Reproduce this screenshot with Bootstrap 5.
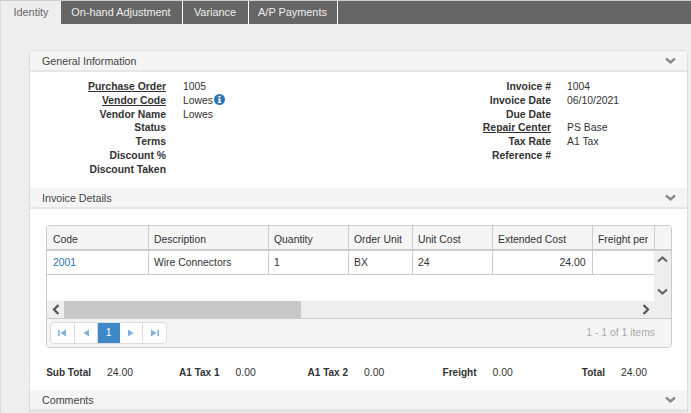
<!DOCTYPE html>
<html lang="en">
<head>
<meta charset="utf-8">
<title>Invoice</title>
<link rel="stylesheet" href="https://cdn.jsdelivr.net/npm/bootstrap@5.3.0/dist/css/bootstrap.min.css">
<style>
html,body{height:413px;overflow:hidden}
body{background:#eee;font-family:"Liberation Sans",Arial,sans-serif;font-size:10.4px;color:#333;border-top:1px solid #ccc;border-left:1px solid #ddd}
.tabbar{height:23px;background:#666;flex-wrap:nowrap}
.tabbar .tabx{display:block;height:23px;line-height:23px;font-size:10.9px;color:#eee;text-align:center;border-right:1px solid #fff;text-decoration:none;padding-right:1px}
.tabbar .tabx.on{background:#eee;color:#666;border-right:0;padding-right:0}
.panelx{margin:26px 3px 0 28px;border:1px solid #ddd;border-radius:4px 4px 0 0;background:#fff;--bs-card-inner-border-radius:3px}
.headx{height:21px;line-height:17px;padding:2px 11px 0 12px;font-size:10.7px;color:#444;background:#f5f5f5;border-bottom:2px solid #e6e6e6}
.headx svg{display:block;margin-top:-2px}
.bodyx{height:116px;padding-top:8px}
.rowx{line-height:13.8px;height:13.8px;display:flex}
.lab{font-weight:700;text-align:right;color:#333}
.lab a{color:#333}
.left-lab{width:136px}
.left-val{margin-left:17px}
.right-lab{width:191px}
.right-val{margin-left:16px}
.fieldsL{width:330px}
.infox{margin-left:-1.5px}
.bodyy{height:181px;padding:16px 15px 0 16px}
.gridx{height:123px;width:626px;border:1px solid #ccc;border-radius:4px;overflow:hidden;background:#f5f5f5}
.gridhead{height:25px;border-bottom:2px solid #ccc;background:#f5f5f5}
.gridt{table-layout:fixed;border-collapse:collapse;width:607px;margin:0}
.gridt th,.gridt td{font-weight:400;border:0;border-right:1px solid #ccc;padding:0 6px 0 5.5px;overflow:hidden;white-space:nowrap;color:#333;background:transparent;box-shadow:none;vertical-align:middle}
.gridt th:first-child,.gridt td:first-child{padding-left:6px}
.gridt th{height:23px;background:#f5f5f5;padding-top:5px}
.gridt td{height:23px;background:#fff;border-bottom:1px solid #ccc;padding-top:2px}
.gridt th:last-child{padding-right:0}
.gridt a{color:#2e74b5;text-decoration:none}
.gridmid{height:67px}
.mainc{width:607px;flex:none}
.blank{height:26px;background:#fff}
.hbar{height:17px;background:#eee;display:flex}
.vbar{width:17px;background:#eee;display:flex;flex-direction:column;justify-content:space-between;align-items:center;padding:4px 0 22px}
.arrow{width:17px;flex:none;display:flex;align-items:center;justify-content:center}
.thumb{width:237px;background:#c8c8c8;flex:none}
.pagerx{height:29px;border-top:1px solid #ccc;padding:3px 3px 0 3px;background:#f5f5f5}
.pages{width:117px;height:22px;border:1px solid #ddd;border-radius:4px;background:#fff;overflow:hidden;flex:none}
.pages .cellx{flex:1 1 0;display:flex;align-items:center;justify-content:center;border-right:1px solid #ddd;color:#fff}
.pages .cellx:last-child{border-right:0}
.pages .cellx.on{background:#3e88c8;border-right:0;flex:none;width:22px;margin-left:-.5px}
.countx{color:#aaa;padding-right:13px;line-height:22px}
.totals{display:grid;grid-template-columns:repeat(5,128.5px);margin-top:18px;line-height:13px}
.totcell{display:flex}
.totcell b{width:45px;text-align:right;white-space:nowrap;color:#333;font-size:10px}
.totcell span{margin-left:16px}
</style>
</head>
<body>
<div class="tabbar d-flex">
  <a class="tabx on" href="#" style="width:60px">Identity</a>
  <a class="tabx" href="#" style="width:122px">On-hand Adjustment</a>
  <a class="tabx" href="#" style="width:66px">Variance</a>
  <a class="tabx" href="#" style="width:89px">A/P Payments</a>
</div>
<div class="card panelx rounded-bottom-0">
  <div class="headx d-flex justify-content-between align-items-center">General Information
    <svg width="11" height="8" viewBox="0 0 11 8"><path d="M1 1.5 5.5 5.5 10 1.5" fill="none" stroke="#8a8a8a" stroke-width="2.4"/></svg>
  </div>
  <div class="bodyx d-flex">
    <div class="fieldsL">
      <div class="rowx"><div class="lab left-lab"><a href="#">Purchase Order</a></div><div class="left-val">1005</div></div>
      <div class="rowx"><div class="lab left-lab"><a href="#">Vendor Code</a></div><div class="left-val">Lowes
        <svg width="11" height="11" viewBox="0 0 11 11" class="align-top infox"><circle cx="5.5" cy="5.5" r="5.5" fill="#2e74b5"/><path d="M4.5 2h2v1.6h-2zM4 4.4h2.5v3.4h.8V9H3.9V7.8h.8V5.6H4z" fill="#fff"/></svg></div></div>
      <div class="rowx"><div class="lab left-lab">Vendor Name</div><div class="left-val">Lowes</div></div>
      <div class="rowx"><div class="lab left-lab">Status</div></div>
      <div class="rowx"><div class="lab left-lab">Terms</div></div>
      <div class="rowx"><div class="lab left-lab">Discount %</div></div>
      <div class="rowx"><div class="lab left-lab">Discount Taken</div></div>
    </div>
    <div>
      <div class="rowx"><div class="lab right-lab">Invoice #</div><div class="right-val">1004</div></div>
      <div class="rowx"><div class="lab right-lab">Invoice Date</div><div class="right-val">06/10/2021</div></div>
      <div class="rowx"><div class="lab right-lab">Due Date</div></div>
      <div class="rowx"><div class="lab right-lab"><a href="#">Repair Center</a></div><div class="right-val">PS Base</div></div>
      <div class="rowx"><div class="lab right-lab">Tax Rate</div><div class="right-val">A1 Tax</div></div>
      <div class="rowx"><div class="lab right-lab">Reference #</div></div>
    </div>
  </div>
  <div class="headx d-flex justify-content-between align-items-center">Invoice Details
    <svg width="11" height="8" viewBox="0 0 11 8"><path d="M1 1.5 5.5 5.5 10 1.5" fill="none" stroke="#8a8a8a" stroke-width="2.4"/></svg>
  </div>
  <div class="bodyy">
    <div class="gridx">
      <div class="gridhead">
        <table class="table gridt">
          <colgroup><col style="width:101px"><col style="width:120px"><col style="width:80px"><col style="width:64px"><col style="width:80px"><col style="width:100px"><col style="width:62px"></colgroup>
          <thead><tr><th>Code</th><th>Description</th><th>Quantity</th><th>Order Unit</th><th>Unit Cost</th><th>Extended Cost</th><th>Freight per</th></tr></thead>
        </table>
      </div>
      <div class="gridmid d-flex">
        <div class="mainc">
          <table class="table gridt">
            <colgroup><col style="width:101px"><col style="width:120px"><col style="width:80px"><col style="width:64px"><col style="width:80px"><col style="width:100px"><col style="width:62px"></colgroup>
            <tbody><tr><td><a href="#">2001</a></td><td>Wire Connectors</td><td>1</td><td>BX</td><td>24</td><td class="text-end">24.00</td><td></td></tr></tbody>
          </table>
          <div class="blank"></div>
          <div class="hbar">
            <div class="arrow"><svg width="8" height="11" viewBox="0 0 8 11"><path d="M6.5 1 2 5.5 6.5 10" fill="none" stroke="#555" stroke-width="2.2"/></svg></div>
            <div class="thumb"></div>
            <div class="flex-grow-1"></div>
            <div class="arrow"><svg width="8" height="11" viewBox="0 0 8 11"><path d="M1.5 1 6 5.5 1.5 10" fill="none" stroke="#555" stroke-width="2.2"/></svg></div>
          </div>
        </div>
        <div class="vbar">
          <svg width="11" height="8" viewBox="0 0 11 8"><path d="M1 6.5 5.5 2.5 10 6.5" fill="none" stroke="#666" stroke-width="2.2"/></svg>
          <svg width="11" height="8" viewBox="0 0 11 8"><path d="M1 1.5 5.5 5.5 10 1.5" fill="none" stroke="#666" stroke-width="2.2"/></svg>
        </div>
      </div>
      <div class="pagerx d-flex justify-content-between">
        <div class="pages d-flex">
          <div class="cellx"><svg width="8" height="8" viewBox="0 0 8 8"><path d="M0 1h1.6v6H0zM8 .5v7L2.4 4z" fill="#7db0dc"/></svg></div>
          <div class="cellx"><svg width="6" height="8" viewBox="0 0 6 8"><path d="M6 .5v7L.5 4z" fill="#7db0dc"/></svg></div>
          <div class="cellx on">1</div>
          <div class="cellx"><svg width="6" height="8" viewBox="0 0 6 8"><path d="M0 .5v7L5.5 4z" fill="#7db0dc"/></svg></div>
          <div class="cellx"><svg width="8" height="8" viewBox="0 0 8 8"><path d="M0 .5v7L5.6 4zM6.4 1H8v6H6.4z" fill="#7db0dc"/></svg></div>
        </div>
        <div class="countx">1 - 1 of 1 items</div>
      </div>
    </div>
    <div class="totals">
      <div class="totcell"><b>Sub Total</b><span>24.00</span></div>
      <div class="totcell"><b>A1 Tax 1</b><span>0.00</span></div>
      <div class="totcell"><b>A1 Tax 2</b><span>0.00</span></div>
      <div class="totcell"><b>Freight</b><span>0.00</span></div>
      <div class="totcell"><b>Total</b><span>24.00</span></div>
    </div>
  </div>
  <div class="headx d-flex justify-content-between align-items-center">Comments
    <svg width="11" height="8" viewBox="0 0 11 8"><path d="M1 1.5 5.5 5.5 10 1.5" fill="none" stroke="#8a8a8a" stroke-width="2.4"/></svg>
  </div>
</div>
<script src="https://cdn.jsdelivr.net/npm/bootstrap@5.3.0/dist/js/bootstrap.bundle.min.js"></script>
</body>
</html>
